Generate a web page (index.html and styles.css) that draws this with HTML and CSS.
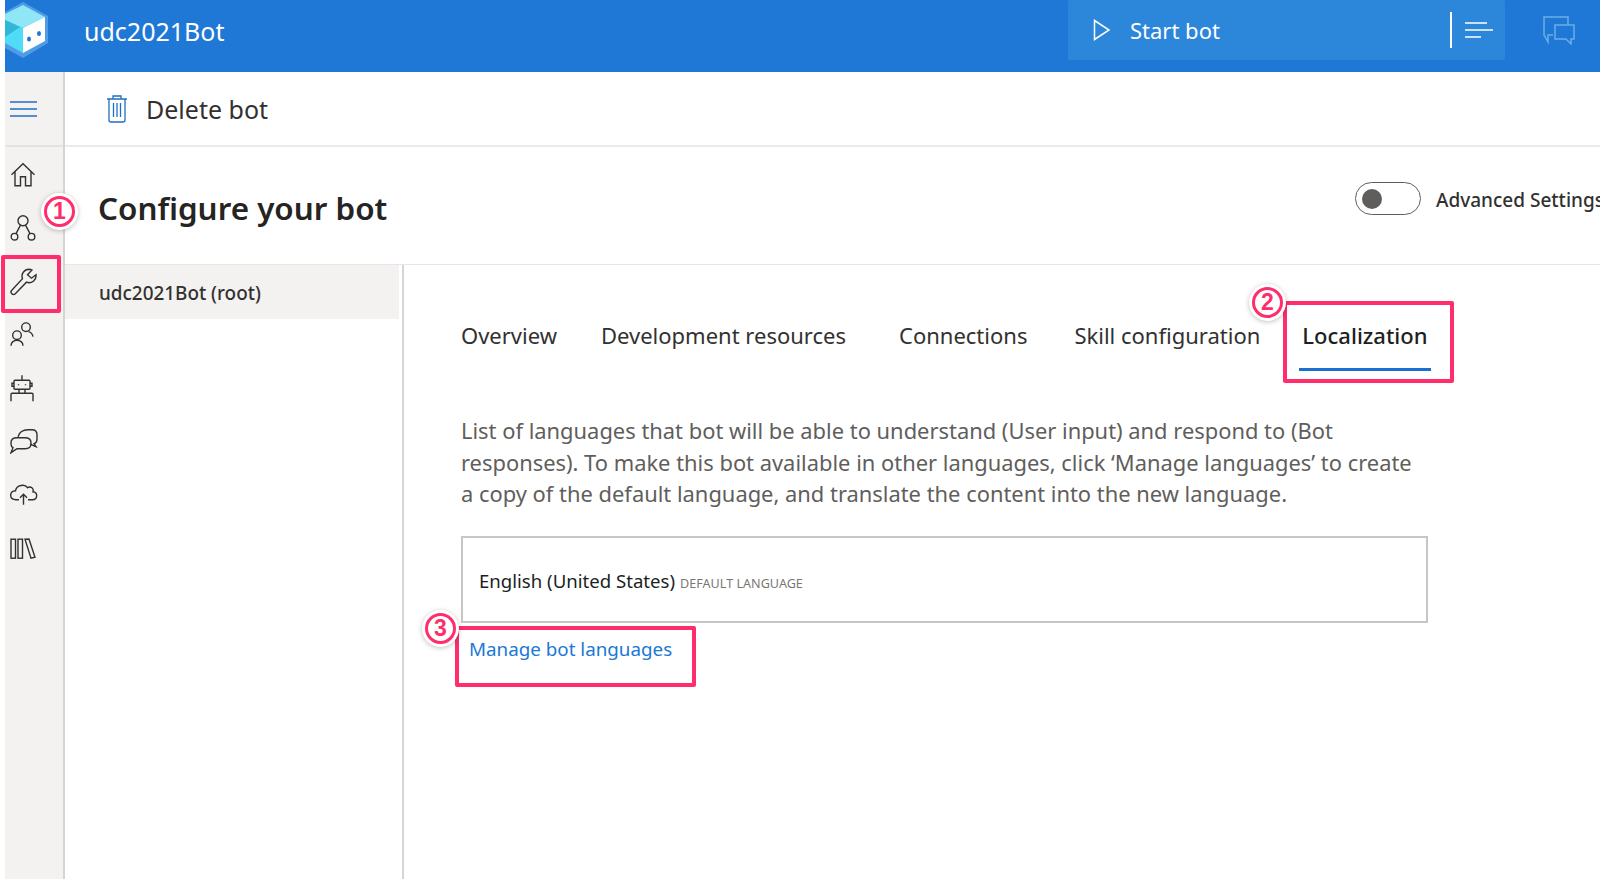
FILE: index.html
```html
<!DOCTYPE html>
<html>
  <head>
    <title>Configure your bot</title>
    <link rel="stylesheet" href="styles.css">
  </head>
  <body>
    <div class="app">
      <header class="topbar">
        <svg class="logo" width="43" height="60" viewBox="0 0 43 60">
          <path d="M18 2 L43 16 V43 L18 58 L0 48 V12 Z" fill="#4f9be6"/>
          <path d="M18 5 L40 17 L18 28 L0 20 V14 Z" fill="#8fe6f7"/>
          <path d="M18 28 L40 17 V41 L18 53 Z" fill="#ffffff"/>
          <path d="M0 20 L18 28 V53 L0 43 Z" fill="#4fdcf7"/>
          <path d="M0 20 L15 27 L0 37 Z" fill="#30b7d6"/>
          <ellipse cx="24" cy="39" rx="2" ry="2.6" fill="#1f77d6"/>
          <ellipse cx="34" cy="33.500" rx="2" ry="2.6" fill="#1f77d6"/>
        </svg>
        <span class="bot-name">udc2021Bot</span>
        <div class="start-group">
          <div class="start-btn">
            <svg width="18" height="22" viewBox="0 0 18 22" fill="none" stroke="#fff" stroke-width="1.500">
              <path d="M1.500 1.500 L16 11 L1.500 20.500 Z"/>
            </svg>
            <span>Start bot</span>
          </div>
          <span class="start-sep"></span>
          <div class="start-menu">
            <svg width="28" height="16" viewBox="0 0 28 16" stroke="#fff" stroke-width="1.300">
              <path d="M0 1 H22 M0 8 H28 M0 15 H16"/>
            </svg>
          </div>
        </div>
        <svg class="chat-icon" width="32" height="29" viewBox="0 0 32 29" fill="none" stroke="#6aaee8" stroke-width="1.500">
          <path d="M10 19 H5 V26 L1 19 V1 H25 V9"/>
          <path d="M12 9 H31 V23 H28 V28 L23 23 H12 Z"/>
        </svg>
      </header>

      <div class="workspace">
        <nav class="rail">
          <div class="rail-top">
            <svg width="28" height="16" viewBox="0 0 28 16" stroke="#1f6fc4" stroke-width="1.300">
              <path d="M0 1 H27 M0 8 H27 M0 15 H27"/>
            </svg>
          </div>
          <div class="rail-icons">
            <svg class="rail-icon" width="26" height="26" viewBox="0 0 26 26">
              <path d="M1.500 13 L13 2 L24.500 13 M5 10 V24 H10.500 V15 H15.500 V24 H21 V10"/>
            </svg>
            <svg class="rail-icon" width="26" height="28" viewBox="0 0 26 28">
              <circle cx="13" cy="7" r="5"/><circle cx="4.500" cy="23" r="3.300"/><circle cx="21.500" cy="23" r="3.300"/>
              <path d="M10.500 11.500 L6 20 M15.500 11.500 L20 20"/>
            </svg>
            <svg class="rail-icon" width="28" height="28" viewBox="0 0 28 28">
              <path d="M19 1.500 A7 7 0 0 0 12.500 11 L1.800 22.500 A2.400 2.400 0 0 0 5.300 26 L16.500 14.500 A7 7 0 0 0 26 7 L21.500 10.500 L17.500 7 L22 2.300 A7 7 0 0 0 19 1.500 Z"/>
            </svg>
            <svg class="rail-icon" width="24" height="26" viewBox="0 0 24 26">
              <circle cx="16" cy="5.500" r="4.300"/><circle cx="7" cy="13.500" r="4.300"/>
              <path d="M1 24 C1 20.500 4 18.500 7 18.500 C10 18.500 13 20.500 13 24 M18.500 10 C20.500 10.500 22.500 12.500 23 15"/>
            </svg>
            <svg class="rail-icon" width="24" height="27" viewBox="0 0 24 27">
              <path d="M12 0 V5 M5 5 H19 Q20 5 20 6 V13 Q20 14 19 14 H5 Q4 14 4 13 V6 Q4 5 5 5 Z M4 8 H2 V11 H4 M20 8 H22 V11 H20 M9 14 V18 M15 14 V18 M1 26 V19 Q1 18 2 18 H22 Q23 18 23 19 V26"/>
              <path d="M8.500 9 V10 M15.500 9 V10"/>
            </svg>
            <svg class="rail-icon" width="28" height="26" viewBox="0 0 28 26">
              <path d="M8 8 Q10 1 18 1 H22 Q27 1 27 6 V10 Q27 14 24 15 L26 18 L20 15.500"/>
              <path d="M7 9 H15 Q21 9 21 14 V15 Q21 20 15 20 H7 L1 24 L3 19 Q1 18 1 15 V14 Q1 9 7 9 Z"/>
            </svg>
            <svg class="rail-icon" width="28" height="22" viewBox="0 0 28 22">
              <path d="M9 16 H6 C-1 16 -1 7 5.500 7 C6.500 1 15 0 17.500 4 C21 2 24 5 23 8 C28 8 28 16 22.500 16 H18"/>
              <path d="M13.500 21 V11 M10 14 L13.500 10.500 L17 14"/>
            </svg>
            <svg class="rail-icon" width="26" height="21" viewBox="0 0 26 21">
              <rect x="1" y="1" width="4.500" height="19"/><rect x="8" y="1" width="4.500" height="19"/>
              <path d="M15 1 L19 0.800 L25 19 L21 20 Z"/>
            </svg>
          </div>
        </nav>

        <main class="main">
          <div class="toolbar">
            <svg width="22" height="28" viewBox="0 0 22 28" fill="none" stroke="#1f6fc4" stroke-width="1.300">
              <path d="M1 4 H21 M7 4 V1 H15 V4 M3 4 V25 Q3 27 5 27 H17 Q19 27 19 25 V4 M7.500 8 V22 M11 8 V22 M14.500 8 V22"/>
            </svg>
            <span>Delete bot</span>
          </div>

          <div class="title-row">
            <h1>Configure your bot</h1>
            <div class="toggle-wrap">
              <span class="toggle"><span class="toggle-knob"></span></span>
              <span class="toggle-label">Advanced Settings</span>
            </div>
          </div>

          <div class="content">
            <aside class="side">
              <div class="side-item">udc2021Bot (root)</div>
            </aside>
            <section class="panel">
              <div class="tabs">
                <span class="tab tab-overview">Overview</span>
                <span class="tab tab-dev">Development resources</span>
                <span class="tab tab-conn">Connections</span>
                <span class="tab tab-skill">Skill configuration</span>
                <span class="tab tab-active">Localization</span>
              </div>
              <p class="desc">List of languages that bot will be able to understand (User input) and respond to (Bot responses). To make this bot available in other languages, click ‘Manage languages’ to create a copy of the default language, and translate the content into the new language.</p>
              <div class="lang-box">
                <span class="lang-name">English (United States)</span>
                <span class="lang-tag">DEFAULT LANGUAGE</span>
              </div>
              <a class="manage-link">Manage bot languages</a>
            </section>
          </div>
        </main>
      </div>
    </div>

    <!-- annotations drawn over the screenshot -->
    <div class="mark mark-wrench"></div>
    <div class="mark mark-tab"></div>
    <div class="mark mark-link"></div>
    <div class="badge badge-1">1</div>
    <div class="badge badge-2">2</div>
    <div class="badge badge-3">3</div>
  </body>
</html>
```

FILE: styles.css
```css
/* page */
html, body {
  margin: 0;
  height: 100%;
  overflow: hidden;
  background-color: #ffffff;
}

body {
  position: relative;
  font-family: "Noto Sans", "Open Sans", Arial, sans-serif;
  color: #323130;
}

.app {
  display: flex;
  flex-direction: column;
  height: 879px;
  margin-left: 5px;
}

/* top bar */
.topbar {
  display: flex;
  align-items: flex-start;
  flex: 0 0 72px;
  background-color: #1f77d6;
  color: #ffffff;
}

.logo {
  flex: 0 0 auto;
}

.bot-name {
  flex: 0 0 auto;
  width: 984px;
  margin-left: 36px;
  font-size: 25px;
  line-height: 62px;
}

.start-group {
  display: flex;
  align-items: center;
  height: 60px;
  background-color: #2c87da;
  border-radius: 2px;
}

.start-btn {
  display: flex;
  align-items: center;
  gap: 19px;
  width: 382px;
  padding-left: 25px;
  box-sizing: border-box;
  font-size: 22px;
}

.start-sep {
  width: 2px;
  height: 36px;
  background-color: #ffffff;
}

.start-menu {
  display: flex;
  align-items: center;
  width: 53px;
  padding-left: 13px;
  box-sizing: border-box;
}

.chat-icon {
  margin: 16px 0 0 38px;
}

/* left rail */
.workspace {
  display: flex;
  flex: 1;
  min-height: 0;
}

.rail {
  flex: 0 0 58px;
  background-color: #f3f2f1;
  border-right: 2px solid #d6d5d4;
}

.rail-top {
  display: flex;
  align-items: center;
  height: 73px;
  padding-left: 5px;
  border-bottom: 2px solid #e3e2e1;
}

.rail-icons {
  display: flex;
  flex-direction: column;
  padding: 1px 0 0 5px;
}

.rail-icon {
  height: 53.400px;
  fill: none;
  stroke: #323130;
  stroke-width: 1.400;
}

/* main column */
.main {
  flex: 1;
  display: flex;
  flex-direction: column;
  min-width: 0;
}

.toolbar {
  display: flex;
  align-items: center;
  gap: 18px;
  height: 73px;
  padding-left: 41px;
  border-bottom: 2px solid #edebe9;
  font-size: 25px;
}

.title-row {
  display: flex;
  align-items: flex-start;
  justify-content: space-between;
  height: 117px;
  border-bottom: 1px solid #e8e6e4;
  white-space: nowrap;
}

h1 {
  margin: 39px 0 0 33px;
  font-size: 31.400px;
  font-weight: 600;
  color: #252423;
}

.toggle-wrap {
  display: flex;
  align-items: center;
  gap: 15px;
  flex: 0 0 auto;
  width: 245px;
  margin-top: 35px;
}

.toggle {
  display: block;
  flex: 0 0 auto;
  width: 64px;
  height: 31px;
  border: 1.500px solid #605e5c;
  border-radius: 17px;
}

.toggle-knob {
  display: block;
  width: 20px;
  height: 20px;
  margin: 5.500px 0 0 6px;
  border-radius: 50%;
  background-color: #605e5c;
}

.toggle-label {
  padding-top: 2px;
  font-size: 19px;
  font-weight: 500;
}

/* body */
.content {
  display: flex;
  flex: 1;
}

.side {
  flex: 0 0 337px;
  border-right: 2px solid #d6d5d4;
}

.side-item {
  width: 334px;
  height: 54px;
  line-height: 56px;
  padding-left: 34px;
  box-sizing: border-box;
  background-color: #f3f2f1;
  font-size: 18.900px;
  font-weight: 500;
}

.panel {
  flex: 1;
  padding-left: 57px;
}

.tabs {
  display: flex;
  margin-top: 55px;
  font-size: 22px;
  white-space: nowrap;
}

.tab-dev { margin-left: 44px; }
.tab-conn { margin-left: 53px; }
.tab-skill { margin-left: 47px; }

.tab-active {
  margin-left: 39px;
  padding: 0 3px 18px;
  font-weight: 500;
  color: #201f1e;
  border-bottom: 3px solid #1a6fcf;
}

.desc {
  width: 960px;
  margin: 44px 0 0 0;
  font-size: 21.900px;
  line-height: 31.600px;
  color: #605e5c;
}

.lang-box {
  display: flex;
  align-items: baseline;
  gap: 5px;
  width: 967px;
  height: 87px;
  margin-top: 26px;
  padding: 30px 0 0 16px;
  box-sizing: border-box;
  border: 2px solid #c8c6c4;
}

.lang-name {
  font-size: 18.600px;
  color: #201f1e;
}

.lang-tag {
  font-size: 12.600px;
  color: #797775;
}

.manage-link {
  display: block;
  margin: 13px 0 0 8px;
  font-size: 18.800px;
  color: #1a78d6;
}

/* annotations */
.mark {
  position: absolute;
  border: 4px solid #ff2d6b;
  border-radius: 2px;
  box-sizing: border-box;
}

.mark-wrench { left: 1px; top: 255px; width: 60px; height: 58px; }
.mark-tab { left: 1283px; top: 301px; width: 171px; height: 82px; }
.mark-link { left: 455px; top: 626px; width: 241px; height: 61px; }

.badge {
  position: absolute;
  width: 31px;
  height: 31px;
  line-height: 25px;
  text-align: center;
  box-sizing: border-box;
  border: 3px solid #ff2d6b;
  border-radius: 50%;
  background-color: #ffffff;
  box-shadow: 0 0 0 3px #ffffff, 0 1px 5px 3px rgba(0, 0, 0, 0.25);
  color: #ff2d6b;
  font-family: "Liberation Sans", sans-serif;
  font-size: 23px;
  font-weight: 700;
}

.badge-1 { left: 44px; top: 196px; }
.badge-2 { left: 1252px; top: 287px; }
.badge-3 { left: 425px; top: 613px; }
```
